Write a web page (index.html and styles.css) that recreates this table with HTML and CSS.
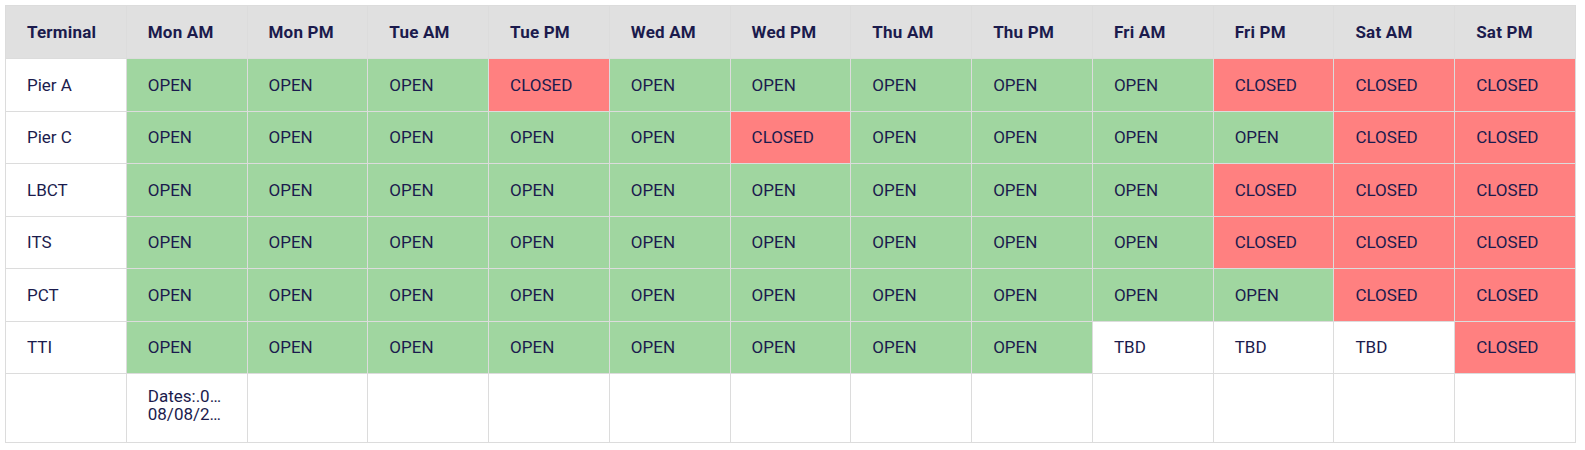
FILE: index.html
```html
<!DOCTYPE html>
<html lang="en">
<head>
<meta charset="utf-8">
<title>Terminal Schedule</title>
<link rel="stylesheet" href="styles.css">
</head>
<body>
<table class="sched">
  <thead>
    <tr>
      <th>Terminal</th><th>Mon AM</th><th>Mon PM</th><th>Tue AM</th><th>Tue PM</th><th>Wed AM</th><th>Wed PM</th><th>Thu AM</th><th>Thu PM</th><th>Fri AM</th><th>Fri PM</th><th>Sat AM</th><th>Sat PM</th>
    </tr>
  </thead>
  <tbody>
    <tr>
      <td>Pier A</td>
      <td class="open">OPEN</td><td class="open">OPEN</td><td class="open">OPEN</td><td class="closed">CLOSED</td><td class="open">OPEN</td><td class="open">OPEN</td><td class="open">OPEN</td><td class="open">OPEN</td><td class="open">OPEN</td><td class="closed">CLOSED</td><td class="closed">CLOSED</td><td class="closed">CLOSED</td>
    </tr>
    <tr>
      <td>Pier C</td>
      <td class="open">OPEN</td><td class="open">OPEN</td><td class="open">OPEN</td><td class="open">OPEN</td><td class="open">OPEN</td><td class="closed">CLOSED</td><td class="open">OPEN</td><td class="open">OPEN</td><td class="open">OPEN</td><td class="open">OPEN</td><td class="closed">CLOSED</td><td class="closed">CLOSED</td>
    </tr>
    <tr>
      <td>LBCT</td>
      <td class="open">OPEN</td><td class="open">OPEN</td><td class="open">OPEN</td><td class="open">OPEN</td><td class="open">OPEN</td><td class="open">OPEN</td><td class="open">OPEN</td><td class="open">OPEN</td><td class="open">OPEN</td><td class="closed">CLOSED</td><td class="closed">CLOSED</td><td class="closed">CLOSED</td>
    </tr>
    <tr>
      <td>ITS</td>
      <td class="open">OPEN</td><td class="open">OPEN</td><td class="open">OPEN</td><td class="open">OPEN</td><td class="open">OPEN</td><td class="open">OPEN</td><td class="open">OPEN</td><td class="open">OPEN</td><td class="open">OPEN</td><td class="closed">CLOSED</td><td class="closed">CLOSED</td><td class="closed">CLOSED</td>
    </tr>
    <tr>
      <td>PCT</td>
      <td class="open">OPEN</td><td class="open">OPEN</td><td class="open">OPEN</td><td class="open">OPEN</td><td class="open">OPEN</td><td class="open">OPEN</td><td class="open">OPEN</td><td class="open">OPEN</td><td class="open">OPEN</td><td class="open">OPEN</td><td class="closed">CLOSED</td><td class="closed">CLOSED</td>
    </tr>
    <tr>
      <td>TTI</td>
      <td class="open">OPEN</td><td class="open">OPEN</td><td class="open">OPEN</td><td class="open">OPEN</td><td class="open">OPEN</td><td class="open">OPEN</td><td class="open">OPEN</td><td class="open">OPEN</td><td>TBD</td><td>TBD</td><td>TBD</td><td class="closed">CLOSED</td>
    </tr>
    <tr class="dates-row">
      <td></td>
      <td><div class="clip">Dates:.0…</div><div class="clip">08/08/2…</div></td>
      <td></td><td></td><td></td><td></td><td></td><td></td><td></td><td></td><td></td><td></td><td></td>
    </tr>
  </tbody>
</table>
</body>
</html>
```

FILE: styles.css
```css
body {
  margin: 5px;
  background: #ffffff;
  font-family: Roboto, "Liberation Sans", sans-serif;
  color: #1b1b4d;
}

.sched {
  width: 1571px;
  table-layout: fixed;
  border-collapse: collapse;
  border: 1px solid #dcdcdc;
  font-size: 17px;
}

.sched th,
.sched td {
  border: 1px solid #dcdcdc;
  padding: 0 21px;
  text-align: left;
  vertical-align: middle;
  white-space: nowrap;
}

.sched th {
  background: #e0e0e0;
  font-weight: 700;
  letter-spacing: 0.2px;
  height: 52px;
}

.sched td {
  font-weight: 400;
  height: 51.5px;
}

.sched .open {
  background: #a0d6a0;
}

.sched .closed {
  background: #ff8080;
}

.sched .dates-row td {
  height: 62px;
  padding-bottom: 6px;
}

.clip {
  line-height: 18px;
  overflow: hidden;
  text-overflow: ellipsis;
}
```
